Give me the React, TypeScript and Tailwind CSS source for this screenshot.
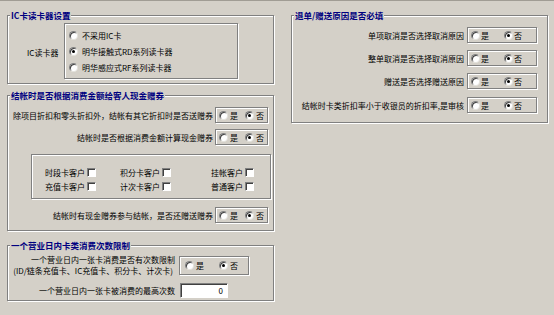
import React from "react";

const etched = "border border-[#808080] shadow-[inset_1px_1px_0_#fff,1px_1px_0_#fff]";

function Radio({ on }: { on?: boolean }) {
  return (
    <span className="flex w-[9px] h-[9px] shrink-0 items-center justify-center rounded-full bg-white border border-t-[#808080] border-l-[#808080] border-b-[#e4e2dc] border-r-[#e4e2dc] shadow-[inset_1px_1px_0_#404040]">
      {on && <span className="w-[3px] h-[3px] rounded-full bg-black" />}
    </span>
  );
}

function Check() {
  return (
    <span className="block w-[9px] h-[9px] shrink-0 bg-white border border-t-[#808080] border-l-[#808080] border-b-white border-r-white shadow-[inset_1px_1px_0_#404040]" />
  );
}

function YesNo({
  box,
  pad,
  gap,
  mid,
}: {
  box: string;
  pad: string;
  gap: string;
  mid: string;
}) {
  return (
    <div className={`${etched} ${box} ${pad} shrink-0 flex items-center`}>
      <span className={`flex items-center ${gap}`}>
        <Radio />
        <span>是</span>
      </span>
      <span className={`flex items-center ${gap} ${mid}`}>
        <Radio on />
        <span>否</span>
      </span>
    </div>
  );
}

function Group({
  title,
  className,
  children,
}: {
  title: string;
  className: string;
  children: React.ReactNode;
}) {
  return (
    <div className={`relative ${etched} ${className}`}>
      <span className="absolute top-[-7px] left-[2px] px-[1px] bg-[#d4d0c8] text-[8.5px] leading-[12px] font-bold text-[#000080] whitespace-nowrap">
        {title}
      </span>
      {children}
    </div>
  );
}

function LeftRow({ label }: { label: string }) {
  return (
    <div className="flex justify-end items-center gap-[2px] pr-[5px] h-[16px]">
      <span className="whitespace-nowrap">{label}</span>
      <YesNo box="w-[53px] h-[16px]" pad="pl-[3px]" gap="gap-[2px]" mid="ml-[7px]" />
    </div>
  );
}

function RightRow({ label, className }: { label: string; className?: string }) {
  return (
    <div className={`flex justify-end items-center gap-[3px] h-[16px] ${className ?? ""}`}>
      <span className="whitespace-nowrap">{label}</span>
      <YesNo box="w-[70px] h-[16px]" pad="pl-[3px]" gap="gap-[1px]" mid="ml-[15px]" />
    </div>
  );
}

function CheckCell({ label, w }: { label: string; w: string }) {
  return (
    <div className={`flex justify-end items-center gap-[2px] ${w}`}>
      <span className="whitespace-nowrap">{label}</span>
      <Check />
    </div>
  );
}

export default function App() {
  return (
    <div className="w-[554px] h-[315px] overflow-hidden bg-[#d4d0c8] border-t border-[#a09c94] flex font-['Noto_Sans_CJK_SC',sans-serif] text-[8px] leading-[11px] text-black">
      {/* left column */}
      <div className="flex flex-col pl-[7px] pt-[14px] w-[274px] shrink-0">
        <Group title="IC卡读卡器设置" className="w-[267px] h-[69px]">
          <div className="flex items-center pt-[7px] pl-[19px]">
            <span className="w-[37px] pt-[2px] whitespace-nowrap">IC读卡器</span>
            <div className={`${etched} w-[174px] h-[56px] flex flex-col pt-[3px]`}>
              <div className="flex items-center h-[16px] pl-[4px] gap-[4px]">
                <Radio />
                <span>不采用IC卡</span>
              </div>
              <div className="flex items-center h-[16px] pl-[4px] gap-[4px]">
                <Radio on />
                <span>明华接触式RD系列读卡器</span>
              </div>
              <div className="flex items-center h-[16px] pl-[4px] gap-[4px]">
                <Radio />
                <span>明华感应式RF系列读卡器</span>
              </div>
            </div>
          </div>
        </Group>

        <Group title="结帐时是否根据消费金额给客人现金赠券" className="w-[267px] h-[136px] mt-[11px]">
          <div className="flex flex-col pt-[11px]">
            <LeftRow label="除项目折扣和零头折扣外，结帐有其它折扣时是否送赠券" />
            <div className="mt-[6px]">
              <LeftRow label="结帐时是否根据消费金额计算现金赠券" />
            </div>
            <div className={`${etched} mt-[9px] ml-[23px] mr-[2px] h-[45px] flex flex-col pt-[10px]`}>
              <div className="flex h-[14px]">
                <CheckCell label="时段卡客户" w="w-[64px]" />
                <CheckCell label="积分卡客户" w="w-[75px]" />
                <CheckCell label="挂帐客户" w="w-[83px]" />
              </div>
              <div className="flex h-[14px]">
                <CheckCell label="充值卡客户" w="w-[64px]" />
                <CheckCell label="计次卡客户" w="w-[75px]" />
                <CheckCell label="普通客户" w="w-[83px]" />
              </div>
            </div>
            <div className="mt-[8px]">
              <LeftRow label="结帐时有现金赠券参与结帐，是否还赠送赠券" />
            </div>
          </div>
        </Group>

        <Group title="一个营业日内卡类消费次数限制" className="w-[267px] h-[56px] mt-[14px]">
          <div className="flex flex-col pt-[8px]">
            <div className="flex items-center">
              <div className="w-[167px] text-right whitespace-nowrap">
                <div>一个营业日内一张卡消费是否有次数限制</div>
                <div className="pr-[2px]">(ID/链条充值卡、IC充值卡、积分卡、计次卡)</div>
              </div>
              <div className="ml-[4px]">
                <YesNo box="w-[70px] h-[19px]" pad="pl-[5px]" gap="gap-[2px]" mid="ml-[15px]" />
              </div>
            </div>
            <div className="flex items-center mt-[7px]">
              <div className="w-[167px] text-right whitespace-nowrap">一个营业日内一张卡被消费的最高次数</div>
              <div className="ml-[5px] w-[48px] h-[15px] bg-white border border-t-[#808080] border-l-[#808080] border-b-white border-r-white shadow-[inset_1px_1px_0_#404040] flex items-center justify-end pr-[4px]">
                0
              </div>
            </div>
          </div>
        </Group>
      </div>

      {/* right column */}
      <div className="pl-[17px] pt-[14px]">
        <Group title="退单/赠送原因是否必填" className="w-[257px] h-[108px]">
          <div className="flex flex-col pt-[11px] pr-[10px]">
            <RightRow label="单项取消是否选择取消原因" />
            <RightRow label="整单取消是否选择取消原因" className="mt-[7px]" />
            <RightRow label="赠送是否选择赠送原因" className="mt-[7px]" />
            <RightRow label="结帐时卡类折扣率小于收银员的折扣率,是审核" className="mt-[8px]" />
          </div>
        </Group>
      </div>
    </div>
  );
}
